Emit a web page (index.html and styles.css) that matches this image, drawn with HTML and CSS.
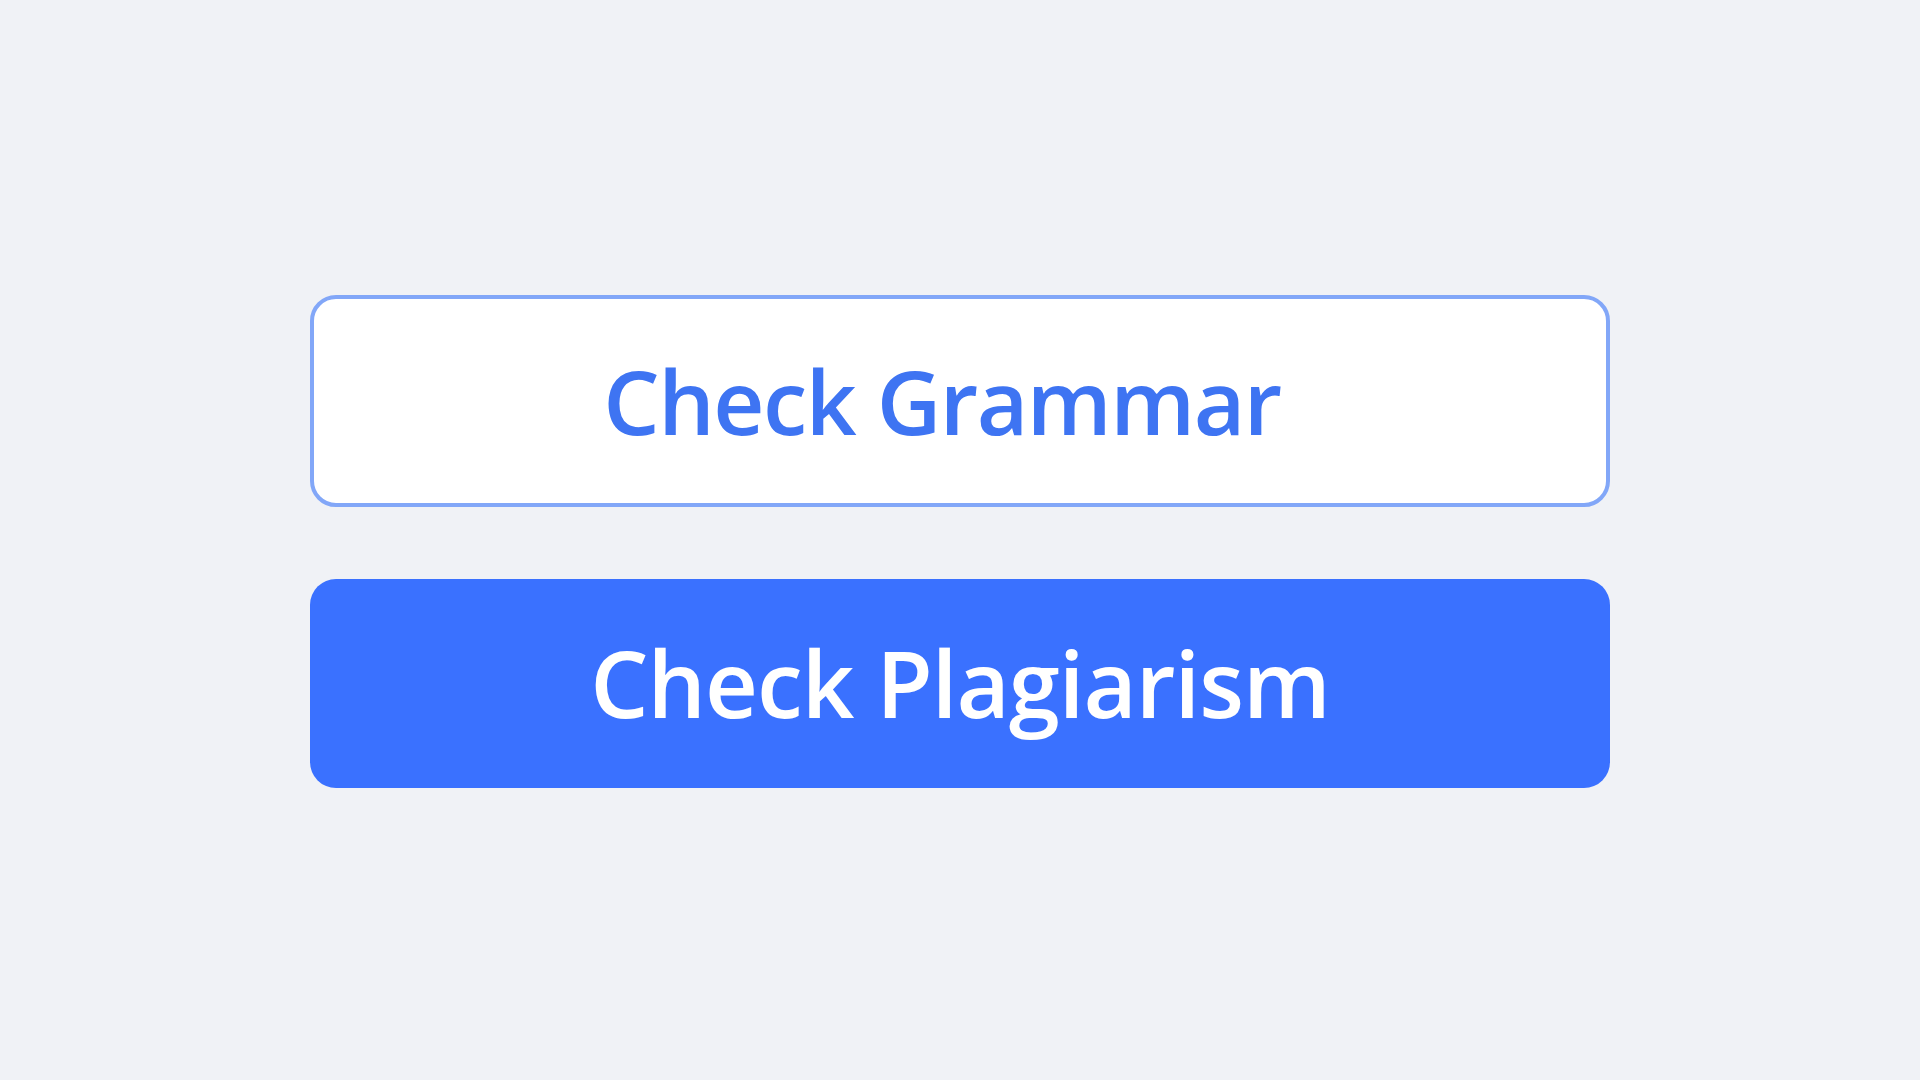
FILE: index.html
```html
<!DOCTYPE html>
<html>
<head>
<meta charset="utf-8">
<link rel="stylesheet" href="styles.css">
</head>
<body>
<main class="page">
  <div class="actions">
    <button class="btn btn-outline"><span class="label">Check Grammar</span></button>
    <button class="btn btn-solid"><span class="label">Check Plagiarism</span></button>
  </div>
</main>
</body>
</html>
```
FILE: styles.css
```css
html, body {
  margin: 0;
  padding: 0;
  background: #f0f2f6;
}
.page {
  width: 1920px;
  height: 1080px;
  display: flex;
  align-items: center;
  justify-content: center;
}
.actions {
  width: 1300px;
  display: flex;
  flex-direction: column;
  gap: 72px;
  transform: translateY(1px);
}
.btn {
  width: 100%;
  height: 212px;
  border-radius: 26px;
  display: flex;
  align-items: center;
  justify-content: center;
  font-family: "Open Sans", "Noto Sans", sans-serif;
  font-weight: 600;
  font-size: 89px;
  letter-spacing: -1.5px;
  padding: 0;
  cursor: pointer;
}
.btn-outline {
  background: #ffffff;
  border: 4px solid #82a7f8;
  color: #3e74f2;
  padding-right: 36px;
}
.btn-solid {
  background: #3a71ff;
  border: none;
  height: 209px;
  color: #ffffff;
  font-size: 92px;
  letter-spacing: -1px;
}
.label {
  display: inline-block;
  line-height: 1;
}
```
